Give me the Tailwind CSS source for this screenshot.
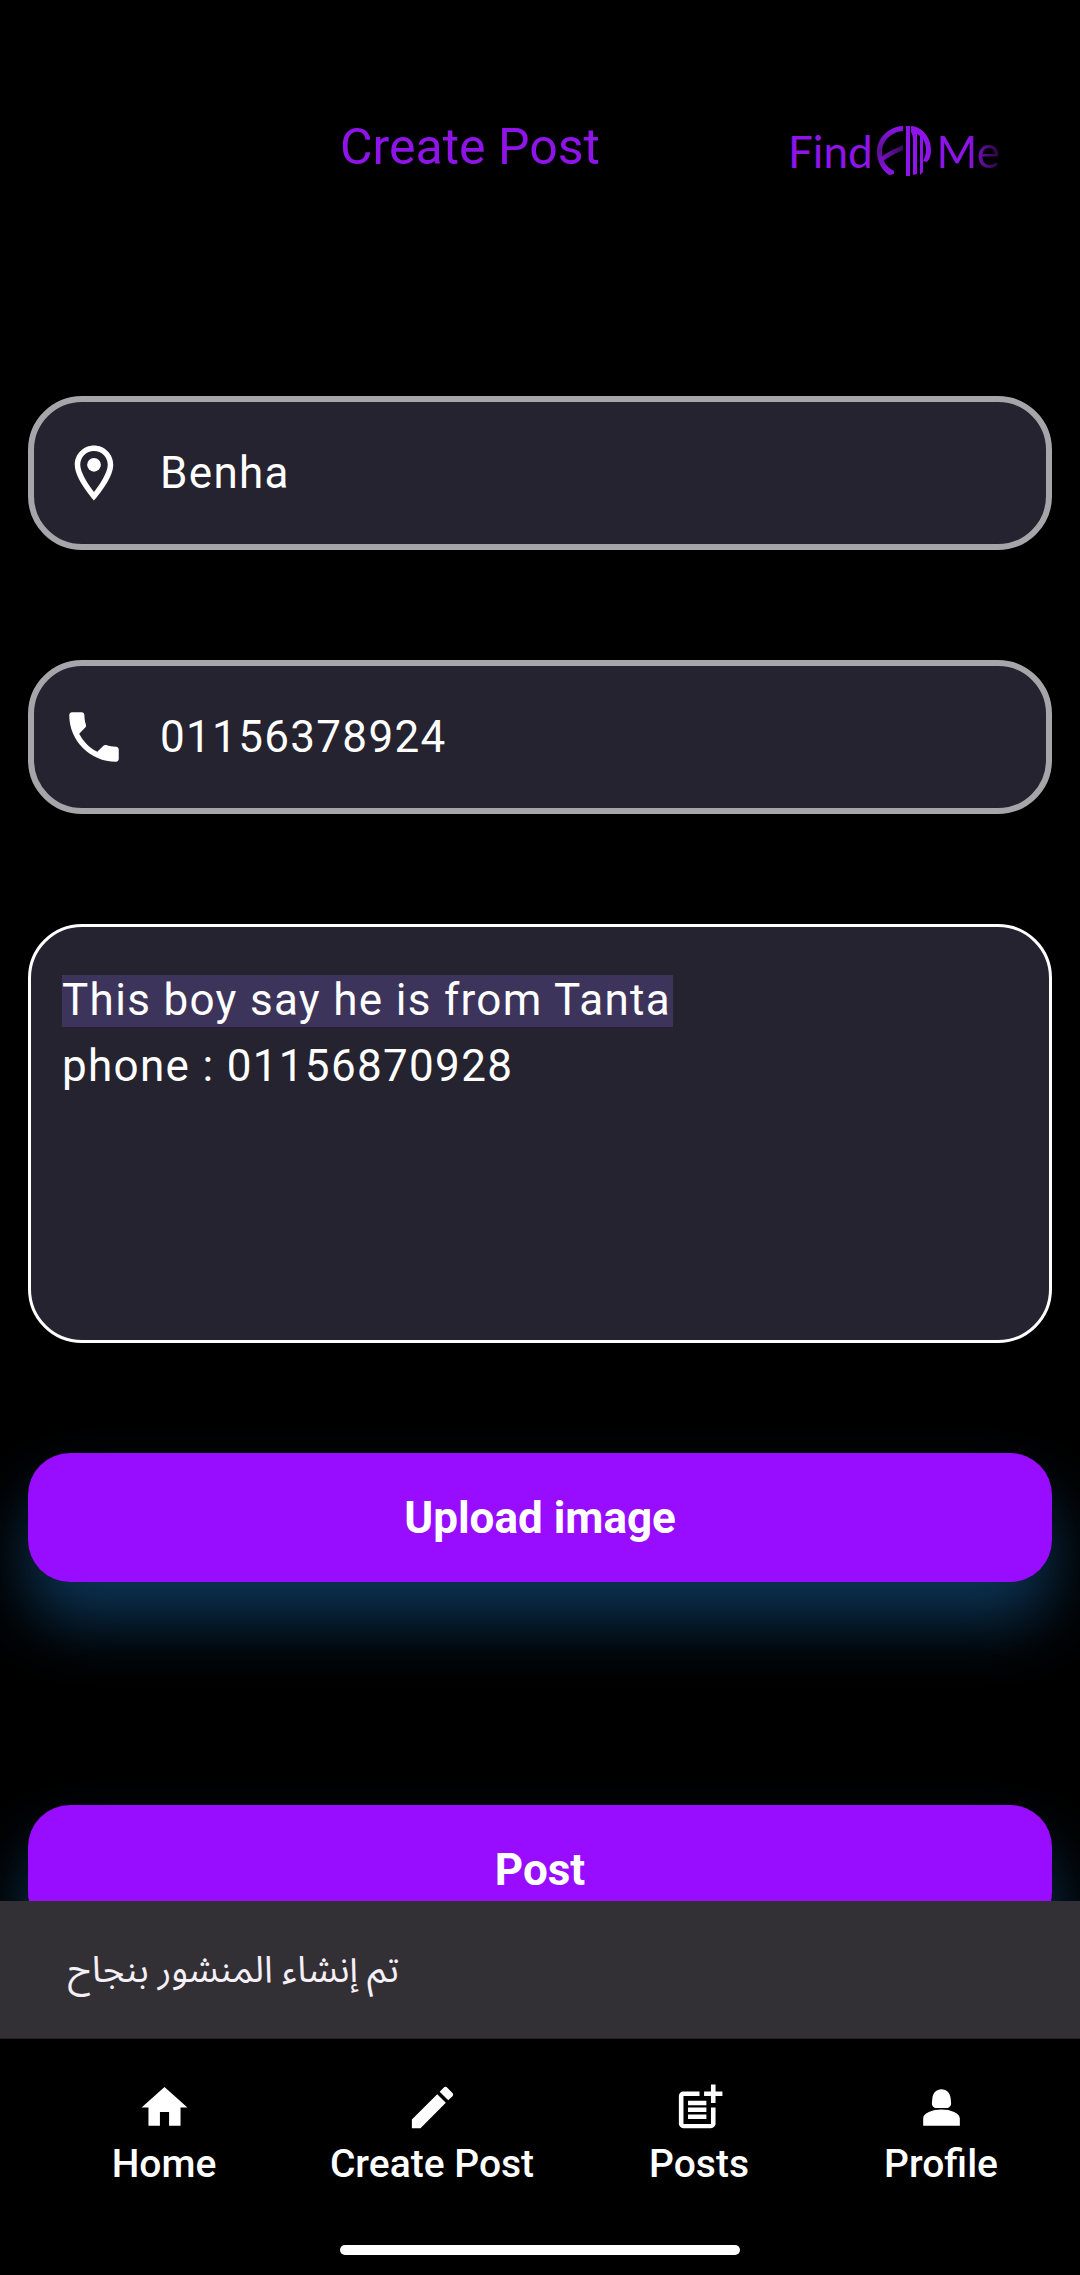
<!DOCTYPE html>
<html lang="en">
<head>
<meta charset="utf-8">
<meta name="viewport" content="width=device-width, initial-scale=1">
<title>Create Post</title>
<script src="https://cdn.jsdelivr.net/npm/@tailwindcss/browser@4"></script>
</head>
<body class="flex h-screen flex-col overflow-hidden bg-black font-[Roboto,sans-serif] text-white">
  <header class="flex h-[286px] shrink-0 items-center pt-2 pr-20 pl-[340px]">
    <h1 class="text-[50px] leading-[60px] text-[#8f14ea]">Create Post</h1>
    <div class="ml-auto flex items-center pt-2 font-[Lato,sans-serif] text-[44px] leading-[60px] text-[#8f14ea]">
      <span>Find</span>
      <svg class="h-[60px] w-[64px]" viewBox="0 0 64 60" fill="none" aria-hidden="true">
        <defs>
          <linearGradient id="arc" x1="0" y1="0" x2="0" y2="1">
            <stop offset="0" stop-color="#8f14ea"/><stop offset=".5" stop-color="#5a1094"/><stop offset="1" stop-color="#8f14ea"/>
          </linearGradient>
          <linearGradient id="bar" x1="1" y1="0" x2="0" y2="0">
            <stop offset="0" stop-color="#3a085f"/><stop offset="1" stop-color="#7a12c8"/>
          </linearGradient>
        </defs>
        <path d="M30 5C15 6 4 17 4 31c0 10 5 18 12 23l5-1v-3C13 46 9 39 9 31 9 20 18 11 30 10z" fill="url(#arc)"/>
        <path d="M7 37C14 31 22 28 30 24v5C21 33 14 37 9 41z" fill="url(#bar)"/>
        <path d="M33 5h4v50h-4zM38 5c12 1 20 12 20 24 0 5-1 9-4 12l-4-1c2-4 3-7 3-11 0-4-1-8-3-11v33l-3 3V15l-3-2v40l-4 1V18c0-3-1-5-2-7z" fill="#8f14ea"/>
      </svg>
      <span class="bg-linear-to-r from-[#8f14ea] from-50% to-[#25053c] bg-clip-text text-transparent">Me</span>
    </div>
  </header>

  <main class="min-h-0 flex-1 overflow-hidden px-7">
    <form class="flex flex-col gap-[110px] pt-[110px]">
      <label class="flex h-[154px] shrink-0 items-center gap-[33px] rounded-[54px] border-6 border-[#a6a5aa] bg-[#24232f] px-[27px]">
        <svg class="size-[66px] shrink-0" viewBox="0 0 24 24" fill="currentColor" aria-hidden="true"><path d="M12 2C8.13 2 5 5.13 5 9c0 5.25 7 13 7 13s7-7.75 7-13c0-3.87-3.13-7-7-7zM7 9c0-2.76 2.24-5 5-5s5 2.24 5 5c0 2.88-2.88 7.19-5 9.88C9.92 16.21 7 11.85 7 9z"/><circle cx="12" cy="9" r="2.5"/></svg>
        <input type="text" aria-label="Location" value="Benha" class="min-w-0 flex-1 bg-transparent text-[44px] leading-[66px] tracking-[0.03em] outline-none">
      </label>
      <label class="flex h-[154px] shrink-0 items-center gap-[33px] rounded-[54px] border-6 border-[#a6a5aa] bg-[#24232f] px-[27px]">
        <svg class="size-[66px] shrink-0" viewBox="0 0 24 24" fill="currentColor" aria-hidden="true"><path d="M6.62 10.79c1.44 2.83 3.76 5.14 6.59 6.59l2.2-2.2c.27-.27.67-.36 1.02-.24 1.12.37 2.33.57 3.57.57.55 0 1 .45 1 1V20c0 .55-.45 1-1 1-9.39 0-17-7.61-17-17 0-.55.45-1 1-1h3.5c.55 0 1 .45 1 1 0 1.25.2 2.45.57 3.57.11.35.03.74-.25 1.02l-2.2 2.2z"/></svg>
        <input type="tel" aria-label="Phone" value="01156378924" class="min-w-0 flex-1 bg-transparent text-[44px] leading-[66px] tracking-[0.03em] outline-none">
      </label>
      <textarea aria-label="Description" class="h-[419px] w-full shrink-0 resize-none rounded-[54px] border-3 border-white bg-[#24232f] bg-[linear-gradient(#3d345b,#3d345b)] bg-[length:611px_52px] bg-[position:31px_48px] bg-no-repeat px-[31px] pt-[40px] text-[44px] leading-[66px] tracking-[0.03em] outline-none">This boy say he is from Tanta
phone : 01156870928</textarea>
      <button type="button" class="h-[129px] w-full shrink-0 rounded-[42px] bg-[#980cff] text-[44px] font-bold leading-[52px] shadow-[0_40px_64px_rgba(33,150,243,0.35)]">Upload image</button>
      <button type="submit" class="mt-[113px] h-[129px] w-full shrink-0 rounded-[42px] bg-[#980cff] text-[44px] font-bold leading-[52px] shadow-[0_40px_64px_rgba(33,150,243,0.35)]">Post</button>
    </form>
  </main>

  <div role="status" class="flex h-[138px] shrink-0 items-center border-b border-[#232126] bg-[#322f35] px-[68px]">
    <p lang="ar" dir="rtl" class="font-[Roboto,'Noto_Sans_Arabic','Noto_Sans',sans-serif] text-[37px] leading-[56px] text-[#f5eff7]">تم إنشاء المنشور بنجاح</p>
  </div>

  <footer class="flex h-[236px] shrink-0 flex-col justify-between pt-[41px] pb-5">
    <nav class="grid grid-cols-[268fr_268fr_266fr_218fr] px-[30px] text-[39px] font-medium leading-[46px]">
      <a href="#" class="flex flex-col items-center gap-[6px] whitespace-nowrap">
        <svg class="size-[55px]" viewBox="0 0 24 24" fill="currentColor" aria-hidden="true"><path d="M10 20v-6h4v6h5v-8h3L12 3 2 12h3v8z"/></svg>
        Home
      </a>
      <a href="#" class="flex flex-col items-center gap-[6px] whitespace-nowrap">
        <svg class="size-[55px]" viewBox="0 0 24 24" fill="currentColor" aria-hidden="true"><path d="M3 17.25V21h3.75L17.81 9.94l-3.75-3.75L3 17.25zM20.71 7.04c.39-.39.39-1.02 0-1.41l-2.34-2.34c-.39-.39-1.02-.39-1.41 0l-1.83 1.83 3.75 3.75 1.83-1.83z"/></svg>
        Create Post
      </a>
      <a href="#" class="flex flex-col items-center gap-[6px] whitespace-nowrap">
        <svg class="size-[55px]" viewBox="0 0 24 24" fill="currentColor" aria-hidden="true"><path d="M17 19.22H5V7h7V5H5c-1.1 0-2 .9-2 2v12c0 1.1.9 2 2 2h12c1.1 0 2-.9 2-2v-7h-2v7.22zM19 2h-2v3h-3v2h3v3h2V7h3V5h-3V2zM7 9h8v2H7zM7 12h8v2H7zM7 15h8v2H7z"/></svg>
        Posts
      </a>
      <a href="#" class="flex flex-col items-center gap-[6px] whitespace-nowrap">
        <svg class="size-[55px]" viewBox="0 0 24 24" fill="currentColor" aria-hidden="true"><path d="M12 4C9.800 4 8.200 5.600 8 8l-.2 2.200c0 1.100.9 2 2 2h4.400c1.100 0 2-.9 2-2L16 8c-.2-2.400-1.800-4-4-4zM4 20v-3.200c0-2.400 4-3.900 8-3.900s8 1.500 8 3.900V20z"/></svg>
        Profile
      </a>
    </nav>
    <div class="mx-auto h-[10px] w-[37%] rounded-full bg-white"></div>
  </footer>
</body>
</html>
